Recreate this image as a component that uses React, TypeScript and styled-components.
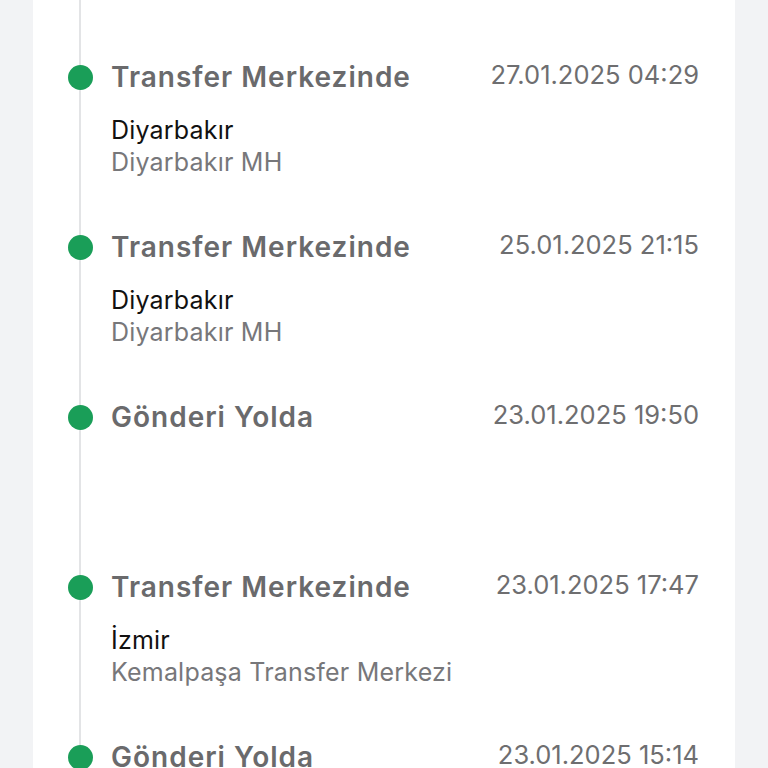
import React from 'react'
import styled, { createGlobalStyle } from 'styled-components'

const GlobalStyle = createGlobalStyle`
  html, body {
    margin: 0;
    padding: 0;
    background: #f2f3f5;
    font-family: Inter, "Noto Sans", "Liberation Sans", sans-serif;
    overflow: hidden;
  }
`

const Page = styled.div`
  height: 768px;
  overflow: hidden;
  padding: 0 33px;
`

const Card = styled.div`
  background: #ffffff;
  width: 702px;
  min-height: 900px;
  padding-right: 36px;
  box-sizing: border-box;
`

const Timeline = styled.div`
  margin-left: 46px;
  border-left: 2px solid #e3e4e6;
  padding-top: 61px;
  display: flex;
  flex-direction: column;
`

const Item = styled.div`
  position: relative;
  min-height: 170px;
  padding-left: 30px;
  box-sizing: border-box;
`

const Dot = styled.span`
  position: absolute;
  left: -13px;
  top: 4px;
  width: 25px;
  height: 25px;
  border-radius: 50%;
  background: #1a9e58;
`

const Header = styled.div`
  display: flex;
  justify-content: space-between;
  align-items: flex-start;
`

const Title = styled.div`
  font-size: 28px;
  line-height: 32px;
  font-weight: 600;
  color: #6a6a6c;
  letter-spacing: 1px;
`

const Time = styled.div`
  font-size: 25.5px;
  line-height: 28px;
  color: #6e6e70;
`

const City = styled.div`
  margin-top: 21px;
  font-size: 25px;
  line-height: 32px;
  color: #111111;
  letter-spacing: 0.2px;
`

const Place = styled.div`
  font-size: 25px;
  line-height: 32px;
  color: #77777a;
  letter-spacing: 0.2px;
`

interface Event {
  title: string
  time: string
  city?: string
  place?: string
}

const events: Event[] = [
  { title: 'Transfer Merkezinde', time: '27.01.2025 04:29', city: 'Diyarbakır', place: 'Diyarbakır MH' },
  { title: 'Transfer Merkezinde', time: '25.01.2025 21:15', city: 'Diyarbakır', place: 'Diyarbakır MH' },
  { title: 'Gönderi Yolda', time: '23.01.2025 19:50' },
  { title: 'Transfer Merkezinde', time: '23.01.2025 17:47', city: 'İzmir', place: 'Kemalpaşa Transfer Merkezi' },
  { title: 'Gönderi Yolda', time: '23.01.2025 15:14' },
]

const App: React.FC = () => {
  return (
    <Page>
      <GlobalStyle />
      <Card>
        <Timeline>
          {events.map((ev, i) => (
            <Item key={i}>
              <Dot />
              <Header>
                <Title>{ev.title}</Title>
                <Time>{ev.time}</Time>
              </Header>
              {ev.city && <City>{ev.city}</City>}
              {ev.place && <Place>{ev.place}</Place>}
            </Item>
          ))}
        </Timeline>
      </Card>
    </Page>
  )
}

export default App
